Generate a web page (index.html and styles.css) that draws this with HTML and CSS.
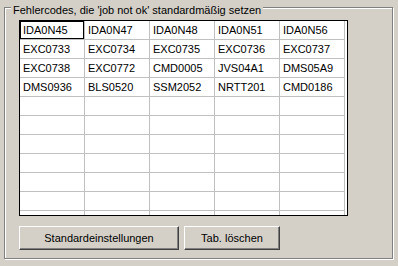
FILE: index.html
```html
<!DOCTYPE html>
<html lang="de">
<head>
    <meta charset="UTF-8">
    <title>Fehlercodes</title>
    <link rel="stylesheet" href="styles.css">
</head>
<body>
    <div class="group">
        <span class="caption">Fehlercodes, die 'job not ok' standardmäßig setzen</span>

        <div class="codes" id="codes">
            <!-- cells are filled by the script -->
        </div>

        <div class="buttons">
            <button class="btn btn-defaults">Standardeinstellungen</button>
            <button class="btn btn-clear">Tab. löschen</button>
        </div>
    </div>

    <script>
        const codes = [
            'IDA0N45', 'IDA0N47', 'IDA0N48', 'IDA0N51', 'IDA0N56',
            'EXC0733', 'EXC0734', 'EXC0735', 'EXC0736', 'EXC0737',
            'EXC0738', 'EXC0772', 'CMD0005', 'JVS04A1', 'DMS05A9',
            'DMS0936', 'BLS0520', 'SSM2052', 'NRTT201', 'CMD0186'
        ];

        const grid = document.getElementById('codes');
        // 11 rows, the last one is cut off by the frame
        for (let i = 0; i < 55; i++) {
            const cell = document.createElement('div');
            cell.className = 'cell';
            if (i === 0) cell.classList.add('current');
            cell.textContent = codes[i] || '';
            grid.appendChild(cell);
        }
    </script>
</body>
</html>
```

FILE: styles.css
```css
* {
    box-sizing: border-box;
}

body {
    margin: 0;
    background: #d4d0c8;
    font-family: 'Liberation Sans', Arial, sans-serif;
    font-size: 11px;
    color: #000;
    height: 266px;
    overflow: hidden;
}

.group {
    position: relative;
    margin: 7px 0 0 4px;
    width: 389px;
    height: 252px;
    padding: 12px 0 0 14px;
    border: 1px solid #808080;
    box-shadow: inset 1px 1px #fff, 1px 1px #fff;
}

.caption {
    position: absolute;
    top: -4px;
    left: 6px;
    padding: 0 2px;
    line-height: 13px;
    background: #d4d0c8;
    white-space: nowrap;
}

.codes {
    display: grid;
    grid-template-columns: repeat(5, 65px);
    grid-auto-rows: 19px;
    width: 329px;
    height: 196px;
    border: 1px solid #000;
    background: #fff;
    overflow: hidden;
}

.cell {
    padding-left: 3px;
    line-height: 19px;
    border-right: 1px solid #c0c0c0;
    border-bottom: 1px solid #c0c0c0;
    white-space: nowrap;
}

.cell.current {
    box-shadow: inset 0 0 0 1px #000;
}

.buttons {
    display: flex;
    gap: 5px;
    margin-top: 10px;
}

.btn {
    height: 24px;
    padding: 0;
    font-family: inherit;
    font-size: 11px;
    color: #000;
    background: #d4d0c8;
    border: 1px solid;
    border-color: #fff #404040 #404040 #fff;
    border-radius: 0;
    box-shadow: inset -1px -1px #808080;
}

.btn-defaults {
    width: 160px;
}

.btn-clear {
    width: 96px;
}
```
